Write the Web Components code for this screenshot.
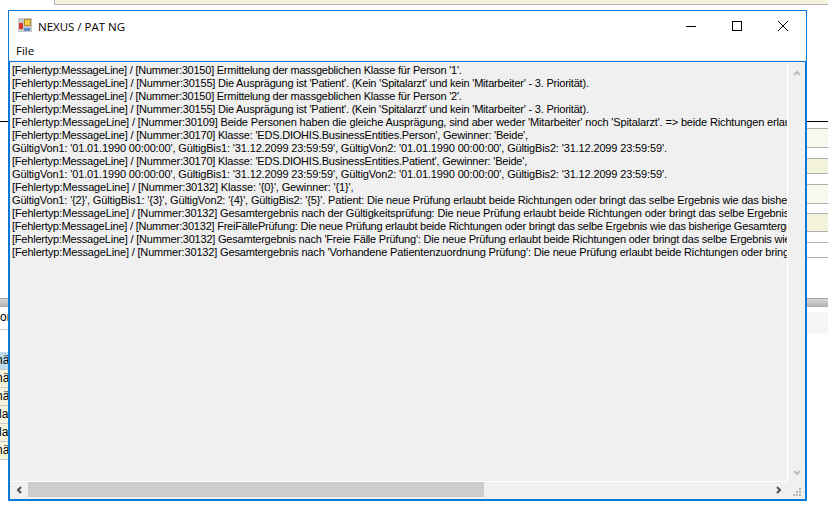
<!DOCTYPE html>
<html>
<head>
<meta charset="utf-8">
<title>NEXUS / PAT NG</title>
<style>
  html, body { margin: 0; padding: 0; background: #fff; }
  body { width: 828px; height: 516px; overflow: hidden; position: relative; font-family: "Liberation Sans", Arial, sans-serif; }
</style>
</head>
<body>
<back-ground></back-ground>
<app-window title-text="NEXUS / PAT NG">
  <log-line>[Fehlertyp:MessageLine] / [Nummer:30150] Ermittelung der massgeblichen Klasse für Person '1'.</log-line>
  <log-line ls="-0.21">[Fehlertyp:MessageLine] / [Nummer:30155] Die Ausprägung ist 'Patient'. (Kein 'Spitalarzt' und kein 'Mitarbeiter' - 3. Priorität).</log-line>
  <log-line>[Fehlertyp:MessageLine] / [Nummer:30150] Ermittelung der massgeblichen Klasse für Person '2'.</log-line>
  <log-line ls="-0.21">[Fehlertyp:MessageLine] / [Nummer:30155] Die Ausprägung ist 'Patient'. (Kein 'Spitalarzt' und kein 'Mitarbeiter' - 3. Priorität).</log-line>
  <log-line ls="-0.15">[Fehlertyp:MessageLine] / [Nummer:30109] Beide Personen haben die gleiche Ausprägung, sind aber weder 'Mitarbeiter' noch 'Spitalarzt'. =&gt; beide Richtungen erlaubt.</log-line>
  <log-line ls="-0.21">[Fehlertyp:MessageLine] / [Nummer:30170] Klasse: 'EDS.DIOHIS.BusinessEntities.Person', Gewinner: 'Beide',</log-line>
  <log-line ls="-0.14">GültigVon1: '01.01.1990 00:00:00', GültigBis1: '31.12.2099 23:59:59', GültigVon2: '01.01.1990 00:00:00', GültigBis2: '31.12.2099 23:59:59'.</log-line>
  <log-line ls="-0.21">[Fehlertyp:MessageLine] / [Nummer:30170] Klasse: 'EDS.DIOHIS.BusinessEntities.Patient', Gewinner: 'Beide',</log-line>
  <log-line ls="-0.14">GültigVon1: '01.01.1990 00:00:00', GültigBis1: '31.12.2099 23:59:59', GültigVon2: '01.01.1990 00:00:00', GültigBis2: '31.12.2099 23:59:59'.</log-line>
  <log-line ls="-0.14">[Fehlertyp:MessageLine] / [Nummer:30132] Klasse: '{0}', Gewinner: '{1}',</log-line>
  <log-line ls="-0.15">GültigVon1: '{2}', GültigBis1: '{3}', GültigVon2: '{4}', GültigBis2: '{5}'. Patient: Die neue Prüfung erlaubt beide Richtungen oder bringt das selbe Ergebnis wie das bisherige Gesamtergebnis.</log-line>
  <log-line ls="-0.16">[Fehlertyp:MessageLine] / [Nummer:30132] Gesamtergebnis nach der Gültigkeitsprüfung: Die neue Prüfung erlaubt beide Richtungen oder bringt das selbe Ergebnis wie das bisherige.</log-line>
  <log-line ls="-0.23">[Fehlertyp:MessageLine] / [Nummer:30132] FreiFällePrüfung: Die neue Prüfung erlaubt beide Richtungen oder bringt das selbe Ergebnis wie das bisherige Gesamtergebnis.</log-line>
  <log-line ls="-0.21">[Fehlertyp:MessageLine] / [Nummer:30132] Gesamtergebnis nach 'Freie Fälle Prüfung': Die neue Prüfung erlaubt beide Richtungen oder bringt das selbe Ergebnis wie das bisherige.</log-line>
  <log-line ls="-0.16">[Fehlertyp:MessageLine] / [Nummer:30132] Gesamtergebnis nach 'Vorhandene Patientenzuordnung Prüfung': Die neue Prüfung erlaubt beide Richtungen oder bringt das selbe Ergebnis.</log-line>
</app-window>
<script>
class BackGround extends HTMLElement {
  constructor() {
    super();
    this.attachShadow({ mode: "open" });
    this.shadowRoot.innerHTML = `
      <style>
        :host { display: block; position: absolute; inset: 0; overflow: hidden; font: 12px "Liberation Sans", Arial, sans-serif; color: #000; }
        .top { position: absolute; left: 54px; right: 0; top: 0; height: 4px; background: #f5f3dc; border-left: 1px solid #b4b4b4; border-bottom: 1px solid #b4b4b4; }
        .hline { position: absolute; left: 0; right: 0; top: 121px; height: 1px; background: #000; }
        .right { position: absolute; left: 806px; right: 0; top: 122px; }
        .r { box-sizing: content-box; border-bottom: 1px solid #b0b0b0; }
        .p { background: #f8f8ec; }
        .c { background: #f3f3dc; }
        .bar { position: absolute; left: 0; right: 0; top: 298px; height: 9px; background: linear-gradient(#a0a0a4 0, #a0a0a4 1px, #d8d8d8 1px, #b0b0b0); }
        .under { position: absolute; left: 806px; right: 0; top: 312px; height: 22px; background: #f6f6f6; }
        .left { position: absolute; left: 0; top: 307px; width: 9px; }
        .or { height: 22px; line-height: 21px; border-bottom: 1px solid #ccc; white-space: nowrap; }
        .rows { margin-top: 22px; }
        .row { box-sizing: border-box; height: 18px; line-height: 17px; background: #f5f3dc; border-bottom: 1px solid #ccc; white-space: nowrap; text-indent: -4px; }
        .row.sel { background: #bcdcec; }
        .row.la { text-indent: -1px; }
      </style>
      <div class="top"></div>
      <div class="hline"></div>
      <div class="right">
        <div class="r" style="height:6px"></div>
        <div class="r p" style="height:18px"></div>
        <div class="r" style="height:10px"></div>
        <div class="r c" style="height:14px"></div>
        <div class="r" style="height:10px"></div>
        <div class="r p" style="height:18px"></div>
        <div class="r" style="height:9px"></div>
        <div class="r c" style="height:17px"></div>
        <div class="r" style="height:10px"></div>
        <div class="r" style="height:14px"></div>
      </div>
      <div class="bar"></div>
      <div class="under"></div>
      <div class="left">
        <div class="or">or</div>
        <div class="rows">
          <div class="row sel">nä</div>
          <div class="row">nä</div>
          <div class="row">nä</div>
          <div class="row la">la</div>
          <div class="row la">la</div>
          <div class="row">nä</div>
        </div>
      </div>`;
  }
}
customElements.define("back-ground", BackGround);

class LogLine extends HTMLElement {
  constructor() {
    super();
    this.attachShadow({ mode: "open" });
    this.shadowRoot.innerHTML = `
      <style>:host { display: block; height: 13px; line-height: 13px; white-space: nowrap; }</style>
      <slot></slot>`;
  }
  connectedCallback() {
    // each line was measured against the screenshot, its hinted widths differ
    if (this.hasAttribute("ls")) this.style.letterSpacing = this.getAttribute("ls") + "px";
  }
}
customElements.define("log-line", LogLine);

class AppWindow extends HTMLElement {
  constructor() {
    super();
    this.attachShadow({ mode: "open" });
    this.shadowRoot.innerHTML = `
      <style>
        :host { display: flex; flex-direction: column; position: absolute; left: 8px; top: 10px; width: 799px; height: 491px; box-sizing: border-box; background: #fff; border: 1px solid #0a78d7; font-family: "Liberation Sans", Arial, sans-serif; color: #000; }
        .title { display: flex; align-items: center; height: 30px; flex: none; }
        .icon { margin: 0 6px 2px 9px; flex: none; }
        .name { font: 11.5px "Open Sans", sans-serif; flex: 1; }
        .ctl { width: 46px; height: 30px; display: flex; align-items: center; justify-content: center; }
        .menu { box-sizing: border-box; height: 20px; flex: none; font: 11.5px/20px "Open Sans", sans-serif; padding-left: 7px; border-bottom: 1px solid #f0f0f4; }
        .client { flex: 1; min-height: 0; display: grid; grid-template-columns: 1fr 17px; grid-template-rows: 1fr 17px; background: #f0f0f0; border: 1px solid #0a78d7; }
        .log { background: #f0f0f0; overflow: hidden; padding: 2px 0 0 2px; font-size: 11px; letter-spacing: -0.24px; border-right: 1px solid #fff; border-bottom: 1px solid #fff; min-width: 0; }
        .vs, .hs { display: flex; background: #f0f0f0; }
        .vs { flex-direction: column; justify-content: space-between; align-items: center; padding: 8px 0 6px; }
        .hs { align-items: flex-start; }
        .thumb { width: 456px; height: 15px; background: #cdcdcd; }
        .la { margin: 4px 5px 0 5px; flex: none; }
        .ra { margin: 4px 5px 0 auto; flex: none; }
        .grip { background: #f0f0f0; }
        .grip svg { display: block; margin: 6px 0 0 5px; }
      </style>
      <div class="title">
        <svg class="icon" width="14" height="14" viewBox="0 0 14 14">
          <rect x="0" y="0" width="14" height="14" fill="#c8c8c8"/>
          <rect x="6.5" y="1.5" width="6" height="6" fill="#f5cf50" stroke="#b08a20"/>
          <rect x="1" y="5" width="4" height="6" fill="#d8382c"/>
          <rect x="6" y="10" width="6" height="3" fill="#5a8fd8"/>
        </svg>
        <span class="name"></span>
        <span class="ctl"><svg width="10" height="10"><path d="M0 5.5H10" stroke="#000"/></svg></span>
        <span class="ctl"><svg width="10" height="10"><rect x=".5" y=".5" width="9" height="9" fill="none" stroke="#000"/></svg></span>
        <span class="ctl"><svg width="10" height="10"><path d="M0 0L10 10M10 0L0 10" stroke="#000"/></svg></span>
      </div>
      <div class="menu">File</div>
      <div class="client">
        <div class="log"><slot></slot></div>
        <div class="vs">
          <svg width="8" height="6"><path d="M1 5L4 2L7 5" fill="none" stroke="#bdbdbd" stroke-width="2"/></svg>
          <svg width="8" height="6"><path d="M1 1L4 4L7 1" fill="none" stroke="#bdbdbd" stroke-width="2"/></svg>
        </div>
        <div class="hs">
          <svg class="la" width="8" height="8"><path d="M6 1L3 4L6 7" fill="none" stroke="#505050" stroke-width="2"/></svg>
          <div class="thumb"></div>
          <svg class="ra" width="8" height="8"><path d="M2 1L5 4L2 7" fill="none" stroke="#505050" stroke-width="2"/></svg>
        </div>
        <div class="grip">
          <svg width="8" height="8" fill="#b4b4b4"><rect x="6" y="0" width="2" height="2"/><rect x="3" y="3" width="2" height="2"/><rect x="6" y="3" width="2" height="2"/><rect x="0" y="6" width="2" height="2"/><rect x="3" y="6" width="2" height="2"/><rect x="6" y="6" width="2" height="2"/></svg>
        </div>
      </div>`;
    this.shadowRoot.querySelector(".name").textContent = this.getAttribute("title-text");
  }
}
customElements.define("app-window", AppWindow);
</script>
</body>
</html>
